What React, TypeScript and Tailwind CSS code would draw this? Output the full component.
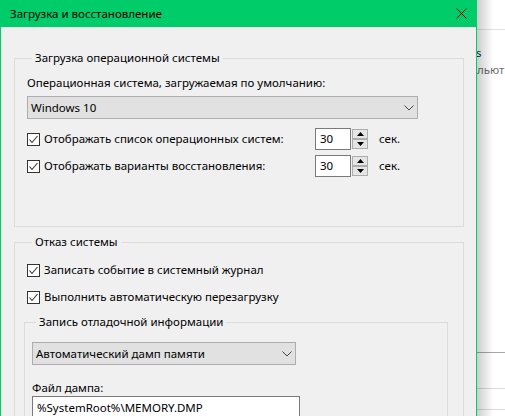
import React from 'react';

const Check: React.FC<{ label: string }> = ({ label }) => (
  <div className="flex items-center h-4">
    <span className="w-[13px] h-[13px] border border-[#333333] bg-white flex items-center justify-center shrink-0">
      <svg width="11" height="11" viewBox="0 0 11 11">
        <path d="M1.5 5.5 L4 8.5 L9.5 2" stroke="#333333" strokeWidth="1.1" fill="none" />
      </svg>
    </span>
    <span className="ml-[4px] whitespace-nowrap">{label}</span>
  </div>
);

const Chevron = () => (
  <svg width="10" height="6" viewBox="0 0 10 6">
    <path d="M0.5 0.5 L5 5 L9.5 0.5" stroke="#444444" strokeWidth="1" fill="none" />
  </svg>
);

const Select: React.FC<{ value: string; width: string }> = ({ value, width }) => (
  <div className={`${width} h-[23px] border border-[#adadad] bg-[#e1e1e1] flex items-center justify-between pl-[3px] pr-[3px]`}>
    <span className="whitespace-nowrap">{value}</span>
    <Chevron />
  </div>
);

const Arrow: React.FC<{ up?: boolean }> = ({ up }) => (
  <svg width="7" height="4" viewBox="0 0 7 4">
    <path d={up ? 'M0 4 L3.5 0 L7 4 Z' : 'M0 0 L3.5 4 L7 0 Z'} fill="#000000" />
  </svg>
);

const Spinner: React.FC<{ value: string }> = ({ value }) => (
  <div className="flex items-center">
    <div className="w-[36px] h-[22px] border border-[#7a7a7a] bg-white pl-[4px] leading-[20px]">{value}</div>
    <div className="ml-px flex flex-col justify-between h-[22px] py-[1px]">
      <div className="w-[16px] h-[10px] border border-[#adadad] bg-[#e5e5e5] flex items-center justify-center">
        <Arrow up />
      </div>
      <div className="w-[16px] h-[10px] border border-[#adadad] bg-[#e5e5e5] flex items-center justify-center">
        <Arrow />
      </div>
    </div>
  </div>
);

const SpinRow: React.FC<{ label: string }> = ({ label }) => (
  <div className="flex items-center h-[22px]">
    <div className="w-[288px]">
      <Check label={label} />
    </div>
    <Spinner value="30" />
    <span className="ml-[11px]">сек.</span>
  </div>
);

export default function App() {
  return (
    <div className="w-[505px] h-[416px] overflow-hidden flex bg-white text-[11.5px] leading-4 text-black font-['Segoe_UI','Noto_Sans',sans-serif]">
      {/* dialog */}
      <div className="w-[477px] shrink-0 h-full border-x border-[#00cc6a] bg-[#f0f0f0] flex flex-col">
        <div className="h-[27px] shrink-0 bg-[#00cc6a] -mx-px flex items-center justify-between pl-[10px] pr-[10px]">
          <span>Загрузка и восстановление</span>
          <svg width="11" height="11" viewBox="0 0 11 11">
            <path d="M0.5 0.5 L10.5 10.5 M10.5 0.5 L0.5 10.5" stroke="#111111" strokeWidth="1" />
          </svg>
        </div>

        <div className="shrink-0 pl-[13px] pr-[12px] pt-[23px]">
          <fieldset className="border border-[#dcdcdc] pl-[12px] pt-[9px] pb-[49px]">
            <legend className="ml-[5px] px-[3px]">Загрузка операционной системы</legend>
            <div>Операционная система, загружаемая по умолчанию:</div>
            <div className="mt-[5px]">
              <Select value="Windows 10" width="w-[391px]" />
            </div>
            <div className="mt-[9px]">
              <SpinRow label="Отображать список операционных систем:" />
            </div>
            <div className="mt-[5px]">
              <SpinRow label="Отображать варианты восстановления:" />
            </div>
          </fieldset>

          <fieldset className="mt-[7px] border border-[#dcdcdc] pl-[12px] pt-[12px] pb-[40px]">
            <legend className="ml-[5px] px-[3px]">Отказ системы</legend>
            <Check label="Записать событие в системный журнал" />
            <div className="mt-[11px]">
              <Check label="Выполнить автоматическую перезагрузку" />
            </div>
            <fieldset className="mt-[9px] -ml-[3px] w-[424px] border border-[#dcdcdc] pl-[7px] pt-[12px] pb-[20px]">
              <legend className="ml-[4px] px-[3px]">Запись отладочной информации</legend>
              <Select value="Автоматический дамп памяти" width="w-[264px]" />
              <div className="mt-[15px]">Файл дампа:</div>
              <div className="w-[268px] h-[23px] border border-[#7a7a7a] bg-white pl-[4px] leading-[21px]">
                %SystemRoot%\MEMORY.DMP
              </div>
            </fieldset>
          </fieldset>
        </div>
      </div>

      {/* window behind */}
      <div className="relative flex-1 overflow-hidden bg-white flex flex-col">
        <div className="shrink-0 mt-[29px] h-px bg-[#e3e3e3]" />
        <div className="shrink-0 mt-[15px] -ml-px whitespace-nowrap text-[#1f2a44]">s</div>
        <div className="shrink-0 mt-px whitespace-nowrap text-[#6d6d6d]">льют</div>
        <div className="shrink-0 mt-[274px] h-px bg-[#a8a8a8]" />
        <div className="shrink-0 mt-[35px] h-px bg-[#dadada]" />
        <div className="shrink-0 mt-[20px] h-px bg-[#dadada]" />
        <div className="absolute inset-y-0 left-0 w-[16px] bg-gradient-to-r from-[rgba(0,0,0,0.2)] to-transparent" />
      </div>
    </div>
  );
}
